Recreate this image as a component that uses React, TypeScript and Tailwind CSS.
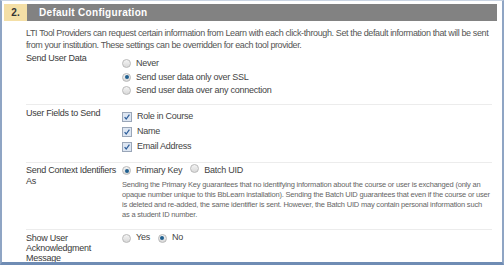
import React from "react";

function Radio({ checked }: { checked?: boolean }) {
  return (
    <span className="relative inline-flex h-[9px] w-[9px] shrink-0 items-center justify-center rounded-full border border-[#b9b9b9] bg-gradient-to-b from-[#f4f4f4] to-[#d9d9d9]">
      {checked && <span className="h-[4px] w-[4px] rounded-full bg-[#1f5f8f]" />}
    </span>
  );
}

function Check() {
  return (
    <span className="inline-flex h-[10px] w-[10px] shrink-0 items-center justify-center border border-[#9aa6b8] bg-[#dde6f2]">
      <svg viewBox="0 0 10 10" className="h-[8px] w-[8px]">
        <path d="M2 5.2 L4 7.5 L8 2" fill="none" stroke="#2b5c9a" strokeWidth="1.5" />
      </svg>
    </span>
  );
}

export default function App() {
  return (
    <div
      className="h-[265px] w-[504px] overflow-hidden border-x-2 border-t border-b-[3px] border-x-[#8fa5c4] border-t-[#c9d4e3] border-b-[#6f8cb4] bg-white text-[9px] tracking-[-0.25px] text-[#444]"
      style={{ fontFamily: '"Liberation Sans", Arial, sans-serif' }}
    >
      {/* Header */}
      <div className="mx-[2px] mt-[3px] flex h-[17px] tracking-normal">
        <div className="flex w-[23px] items-center justify-center bg-[#f4dfa6] text-[10px] font-bold text-[#333]">2.</div>
        <div className="mr-[3px] flex flex-1 items-center bg-[#828282] pl-[12px] text-[10px] font-bold tracking-[0.3px] text-white">
          Default Configuration
        </div>
      </div>

      <div className="pl-[24px] pr-[10px]">
        <p className="-mr-[5px] mt-[6px] leading-[12px] tracking-[-0.38px] text-[#555]">
          LTI Tool Providers can request certain information from Learn with each click-through. Set the default information that will be sent from your institution. These settings can be overridden for each tool provider.
        </p>

        {/* Send User Data */}
        <div className="mt-[2px] flex border-b border-[#ececec] pb-[6px]">
          <div className="w-[94px] shrink-0 leading-[11px] text-[#3a3a3a]">Send User Data</div>
          <div className="flex flex-col pl-[2px] pt-[4px]">
            {[
              ["Never", false],
              ["Send user data only over SSL", true],
              ["Send user data over any connection", false],
            ].map(([t, c]) => (
              <div key={t as string} className="flex h-[13.5px] items-center gap-[5px]">
                <Radio checked={c as boolean} />
                <span>{t}</span>
              </div>
            ))}
          </div>
        </div>

        {/* User Fields to Send */}
        <div className="flex border-b border-[#ececec] pb-[7px]">
          <div className="w-[94px] shrink-0 pt-[3px] leading-[11px] text-[#3a3a3a]">User Fields to Send</div>
          <div className="flex flex-col pl-[2px] pt-[5px]">
            {["Role in Course", "Name", "Email Address"].map((t) => (
              <div key={t} className="flex h-[15px] items-center gap-[5px]">
                <Check />
                <span>{t}</span>
              </div>
            ))}
          </div>
        </div>

        {/* Send Context Identifiers */}
        <div className="flex border-b border-[#ececec] pb-[8.5px] pt-[2.5px]">
          <div className="w-[94px] shrink-0 leading-[11px] text-[#3a3a3a]">
            Send Context Identifiers
            <br />
            As
          </div>
          <div className="flex-1 pl-[2px]">
            <div className="flex h-[11px] items-center">
              <Radio checked />
              <span className="ml-[5px]">Primary Key</span>
              <span className="ml-[8px]"><Radio /></span>
              <span className="ml-[5px]">Batch UID</span>
            </div>
            <p className="-mr-[3px] mt-[4px] text-[7.5px] leading-[10px] tracking-[-0.2px] text-[#666]">
              Sending the Primary Key guarantees that no identifying information about the course or user is exchanged (only an opaque number unique to this BbLearn installation). Sending the Batch UID guarantees that even if the course or user is deleted and re-added, the same identifier is sent. However, the Batch UID may contain personal information such
              <br />
              as a student ID number.
            </p>
          </div>
        </div>

        {/* Show User Acknowledgment Message */}
        <div className="flex pt-[3.5px]">
          <div className="w-[94px] shrink-0 leading-[10px] text-[#3a3a3a]">
            Show User
            <br />
            Acknowledgment
            <br />
            Message
          </div>
          <div className="flex h-[10px] items-center pl-[2px]">
            <Radio />
            <span className="ml-[5px]">Yes</span>
            <span className="ml-[8px]"><Radio checked /></span>
            <span className="ml-[5px]">No</span>
          </div>
        </div>
      </div>
    </div>
  );
}
